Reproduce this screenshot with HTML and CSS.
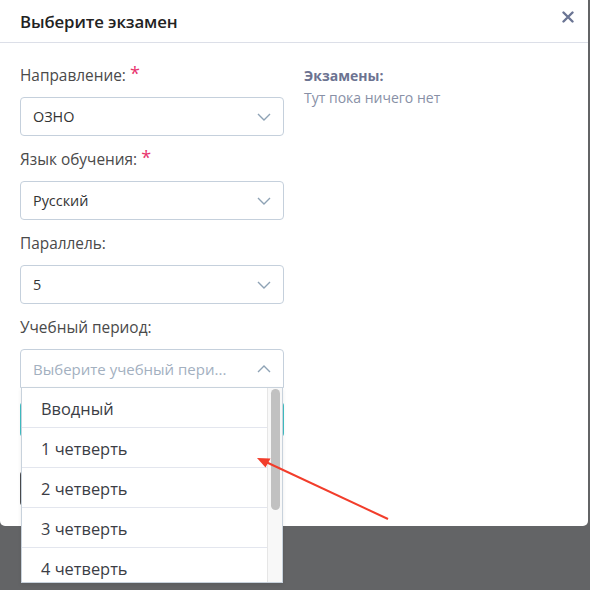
FILE: index.html
```html
<!DOCTYPE html>
<html lang="ru">
<head>
  <meta charset="UTF-8" />
  <meta name="viewport" content="width=device-width, initial-scale=1.0"/>
  <title>Выберите экзамен</title>
  <link rel="stylesheet" href="styles.css">
</head>
<body>
  <div class="modal">
    <header class="modal-header">
      <span class="modal-title">Выберите экзамен</span>
      <button class="close-btn" aria-label="Закрыть">
        <svg width="12" height="12" viewBox="0 0 12 12"><path d="M1.5 1.5l9 9M10.5 1.5l-9 9" stroke="#6b7594" stroke-width="2.4" stroke-linecap="round"/></svg>
      </button>
    </header>

    <div class="modal-body">
      <div class="form-col">
        <div class="field">
          <label>Направление: <span class="req">*</span></label>
          <div class="select">
            <span>ОЗНО</span>
            <svg class="chev" width="14" height="8" viewBox="0 0 14 8"><path d="M1 1l6 6 6-6" fill="none" stroke="#8ea2b5" stroke-width="1.4"/></svg>
          </div>
        </div>

        <div class="field">
          <label>Язык обучения: <span class="req">*</span></label>
          <div class="select">
            <span>Русский</span>
            <svg class="chev" width="14" height="8" viewBox="0 0 14 8"><path d="M1 1l6 6 6-6" fill="none" stroke="#8ea2b5" stroke-width="1.4"/></svg>
          </div>
        </div>

        <div class="field">
          <label>Параллель:</label>
          <div class="select">
            <span>5</span>
            <svg class="chev" width="14" height="8" viewBox="0 0 14 8"><path d="M1 1l6 6 6-6" fill="none" stroke="#8ea2b5" stroke-width="1.4"/></svg>
          </div>
        </div>

        <div class="field">
          <label>Учебный период:</label>
          <div class="select open">
            <span class="placeholder">Выберите учебный пери...</span>
            <svg class="chev" width="14" height="8" viewBox="0 0 14 8"><path d="M1 7l6-6 6 6" fill="none" stroke="#8ea2b5" stroke-width="1.4"/></svg>

            <div class="dropdown">
              <ul class="options">
                <li>Вводный</li>
                <li>1 четверть</li>
                <li>2 четверть</li>
                <li>3 четверть</li>
                <li>4 четверть</li>
              </ul>
              <div class="scroll-track"><div class="scroll-thumb"></div></div>
            </div>
          </div>
        </div>

        <!-- buttons sit under the open list -->
        <button class="btn btn-primary" aria-label="Добавить"></button>
        <button class="btn btn-dark" aria-label="Сохранить"></button>
      </div>

      <div class="exams-col">
        <h4>Экзамены:</h4>
        <p>Тут пока ничего нет</p>
      </div>
    </div>
  </div>

  <svg class="pointer" width="590" height="590" viewBox="0 0 590 590">
    <line x1="388" y1="519" x2="266" y2="462" stroke="#f23d2b" stroke-width="2"/>
    <path d="M257 458l13.5 0.5-5 9z" fill="#f23d2b"/>
  </svg>
</body>
</html>
```

FILE: styles.css
```css
* { box-sizing: border-box; margin: 0; padding: 0; }
html, body { height: 100%; }
body { position: relative; font-family: "Open Sans", "Noto Sans", sans-serif; background: #636466; color: #333; overflow: hidden; }

.modal { position: relative; width: 588px; background: #fff; border-radius: 0 0 5px 5px; }
.modal-header { height: 43px; display: flex; align-items: center; justify-content: space-between; padding: 0 14px 0 20px; border-bottom: 1px solid #dcdfe8; }
.modal-title { font-size: 16.8px; font-weight: 600; color: #222; letter-spacing: -0.1px; }
.close-btn { background: none; border: none; width: 12px; height: 12px; display: flex; margin-top: -8px; }

.modal-body { display: grid; grid-template-columns: 264px 1fr; gap: 20px; padding: 23px 20px 20px 20px; }

.field { margin-bottom: 14px; }
.field label { display: block; font-size: 15.4px; line-height: 20px; color: #4a4a4a; margin-bottom: 11px; }
.req { color: #e8336d; font-size: 18px; line-height: 14px; vertical-align: 1px; }

.select { position: relative; height: 39px; border: 1px solid #c5d0dc; border-radius: 4px; display: flex; align-items: center; justify-content: space-between; padding: 0 12px 0 12px; font-size: 14.4px; color: #333; }
.select .placeholder { color: #a3b0bf; font-size: 15px; }
.select.open { border-bottom-left-radius: 0; border-bottom-right-radius: 0; z-index: 2; }

.dropdown { position: absolute; top: 37px; left: 0; right: 0; height: 196px; background: #fff; border: 1px solid #c8d2dc; display: flex; box-shadow: 0 2px 4px rgba(0,0,0,0.08); }
.options { list-style: none; flex: 1; overflow: hidden; }
.options li { height: 40px; line-height: 41px; padding-left: 19px; font-size: 16.4px; color: #3b3d45; border-bottom: 1px solid #e3e6ee; }
.scroll-track { width: 15px; background: #f8f8f8; border-left: 1px solid #e6e6e6; padding: 1px 2px 0 3px; }
.scroll-thumb { height: 121px; background: #c1c1c1; border-radius: 5px; }

.btn { display: block; width: 264px; height: 35px; border: none; border-radius: 4px; }
.btn-primary { background: #3fbfc4; margin-bottom: 34px; }
.btn-dark { background: #4a4b4e; width: 200px; }

.exams-col h4 { font-size: 14px; font-weight: 700; color: #6c7391; line-height: 20px; }
.exams-col p { font-size: 14px; color: #8890a6; line-height: 20px; margin-top: 2px; }

.pointer { position: absolute; top: 0; left: 0; pointer-events: none; z-index: 5; }
```
